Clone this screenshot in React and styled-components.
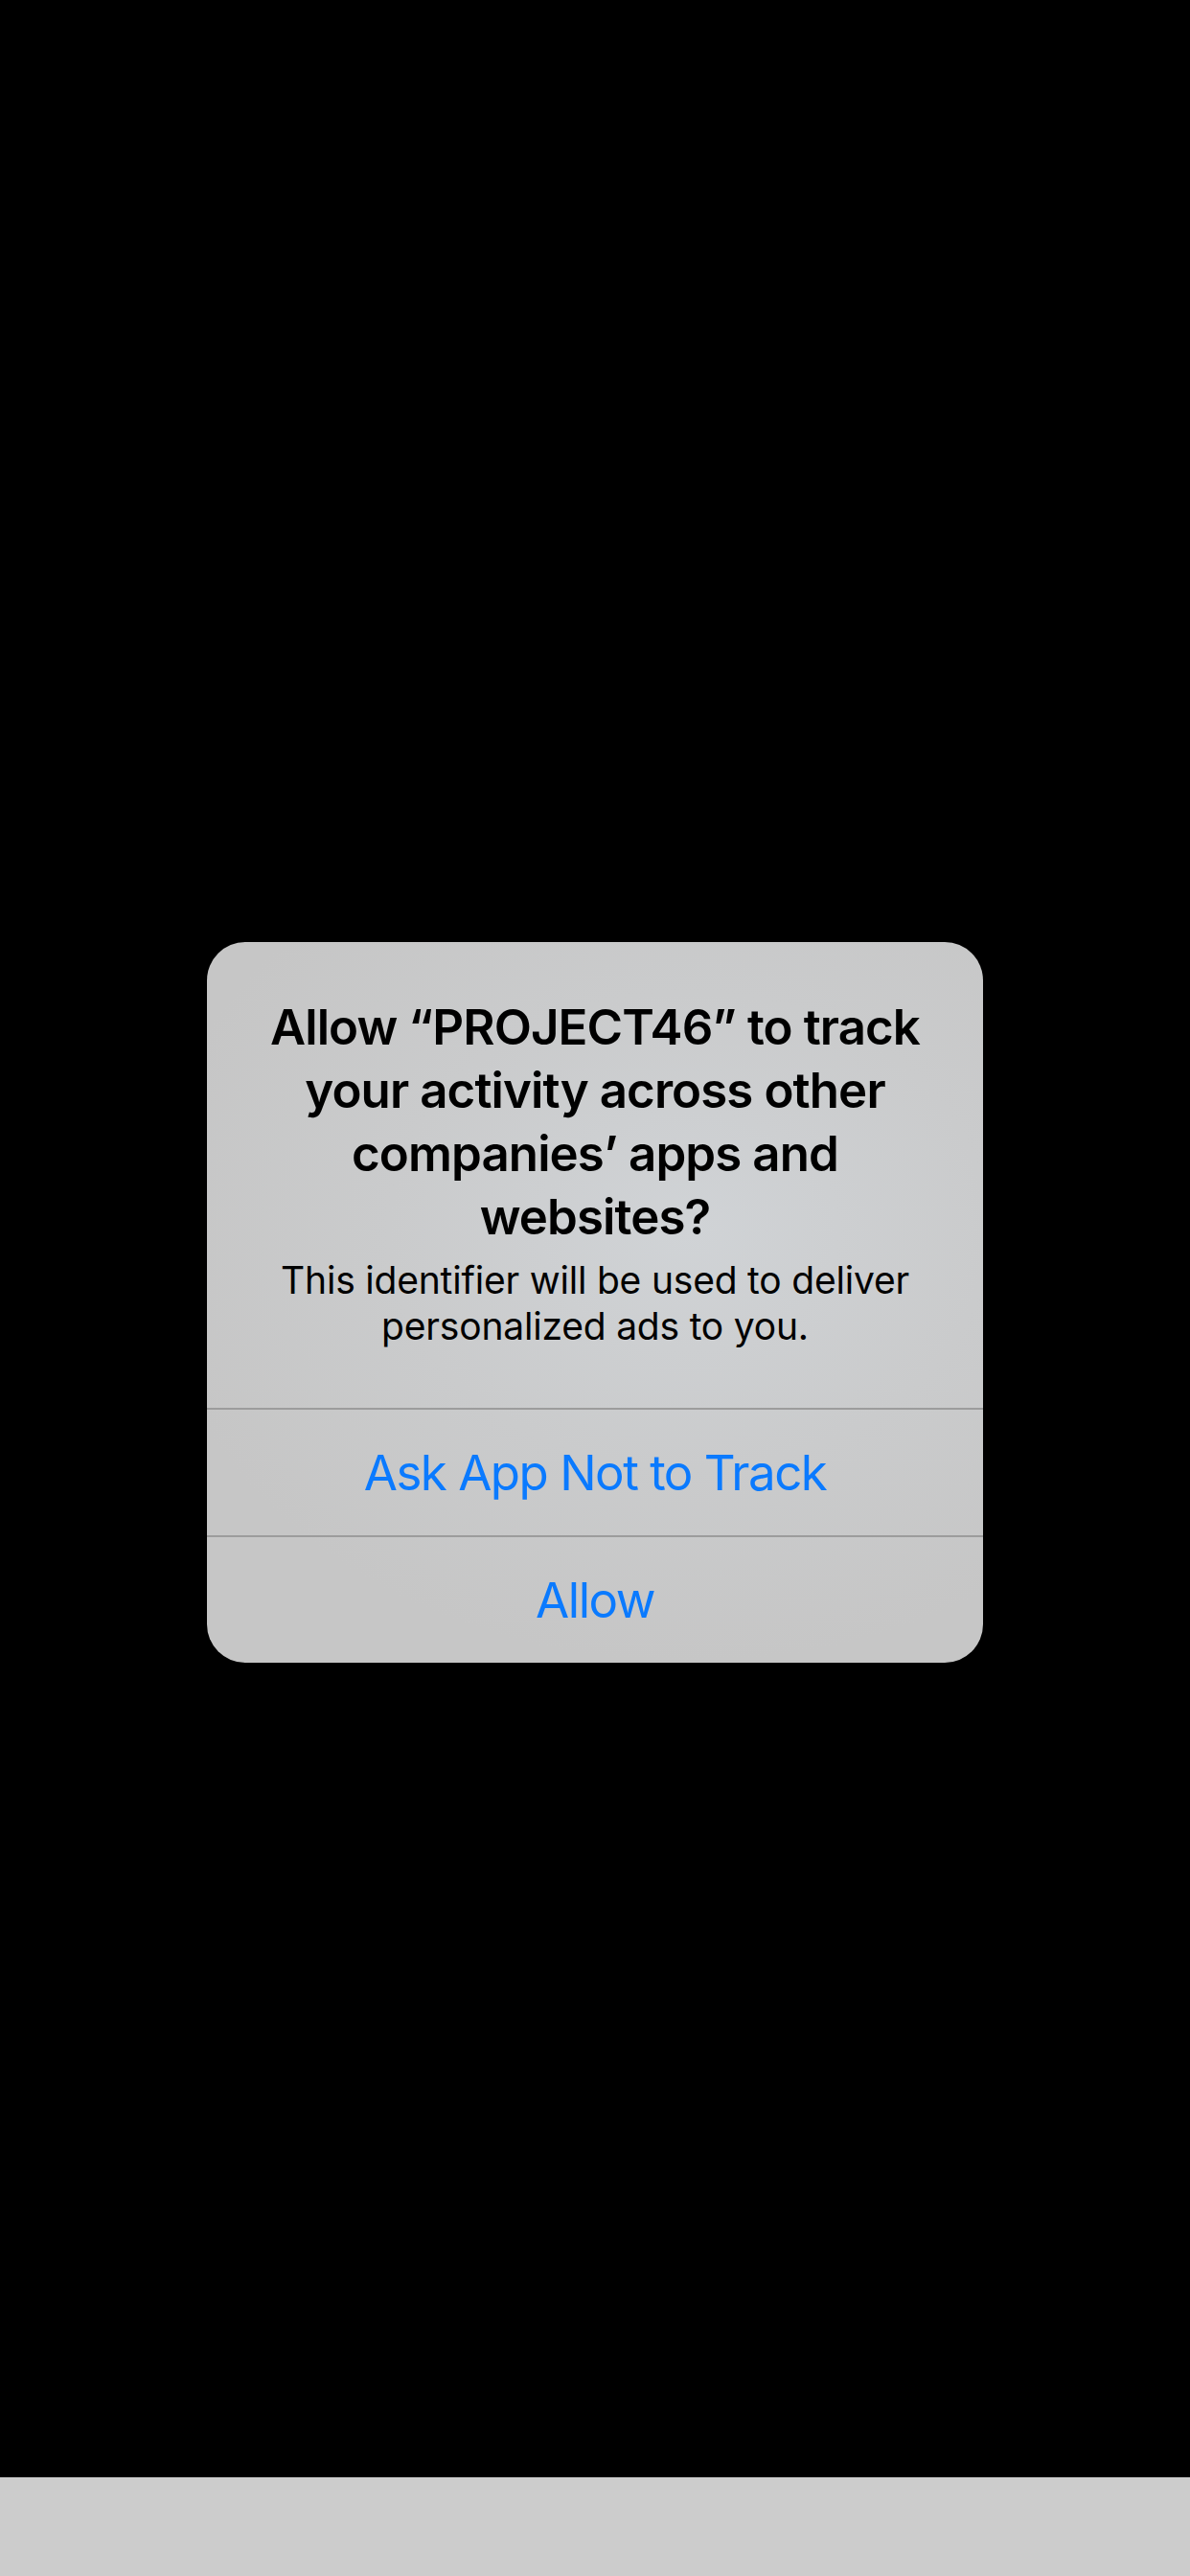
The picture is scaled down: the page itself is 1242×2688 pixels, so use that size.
import React from "react";
import styled, { createGlobalStyle } from "styled-components";

const GlobalStyle = createGlobalStyle`
  html, body {
    margin: 0;
    padding: 0;
    background: #000;
  }
  body {
    font-family: Inter, "Noto Sans", "Liberation Sans", sans-serif;
    -webkit-font-smoothing: antialiased;
  }
`;

const Screen = styled.div`
  width: 1242px;
  height: 2688px;
  display: flex;
  flex-direction: column;
  background: #000;
`;

const Stage = styled.div`
  flex: 1;
  display: flex;
  justify-content: center;
  align-items: flex-start;
  padding-top: 983px;
`;

const BottomBar = styled.div`
  height: 103px;
  background: #cccccc;
`;

const Alert = styled.div`
  width: 810px;
  border-radius: 40px;
  overflow: hidden;
  background: radial-gradient(
    ellipse 70% 60% at 62% 40%,
    #d0d3d6 0%,
    #cacbcc 55%,
    #c6c6c6 100%
  );
  display: flex;
  flex-direction: column;
`;

const Content = styled.div`
  padding: 56px 48px 61px;
  display: flex;
  flex-direction: column;
  align-items: center;
  gap: 9px;
  text-align: center;
`;

const Title = styled.div`
  font-size: 51px;
  line-height: 66px;
  font-weight: 600;
  color: #000;
  letter-spacing: -0.9px;
`;

const Message = styled.div`
  font-size: 39px;
  line-height: 48px;
  font-weight: 400;
  color: #000;
  letter-spacing: -0.2px;
`;

const ActionButton = styled.button`
  height: 133px;
  border: none;
  border-top: 2px solid #9c9c9c;
  background: transparent;
  color: #0a7aff;
  font-family: inherit;
  font-size: 51px;
  font-weight: ${({ $bold }) => ($bold ? 600 : 400)};
  letter-spacing: -1.5px;
  padding: 0;
  display: flex;
  align-items: center;
  justify-content: center;
`;

export default function App() {
  return (
    <>
      <GlobalStyle />
      <Screen>
        <Stage>
          <Alert>
            <Content>
              <Title>
                Allow “PROJECT46” to track your activity across other
                companies’ apps and websites?
              </Title>
              <Message>
                This identifier will be used to deliver personalized ads to
                you.
              </Message>
            </Content>
            <ActionButton>Ask App Not to Track</ActionButton>
            <ActionButton>Allow</ActionButton>
          </Alert>
        </Stage>
        <BottomBar />
      </Screen>
    </>
  );
}
